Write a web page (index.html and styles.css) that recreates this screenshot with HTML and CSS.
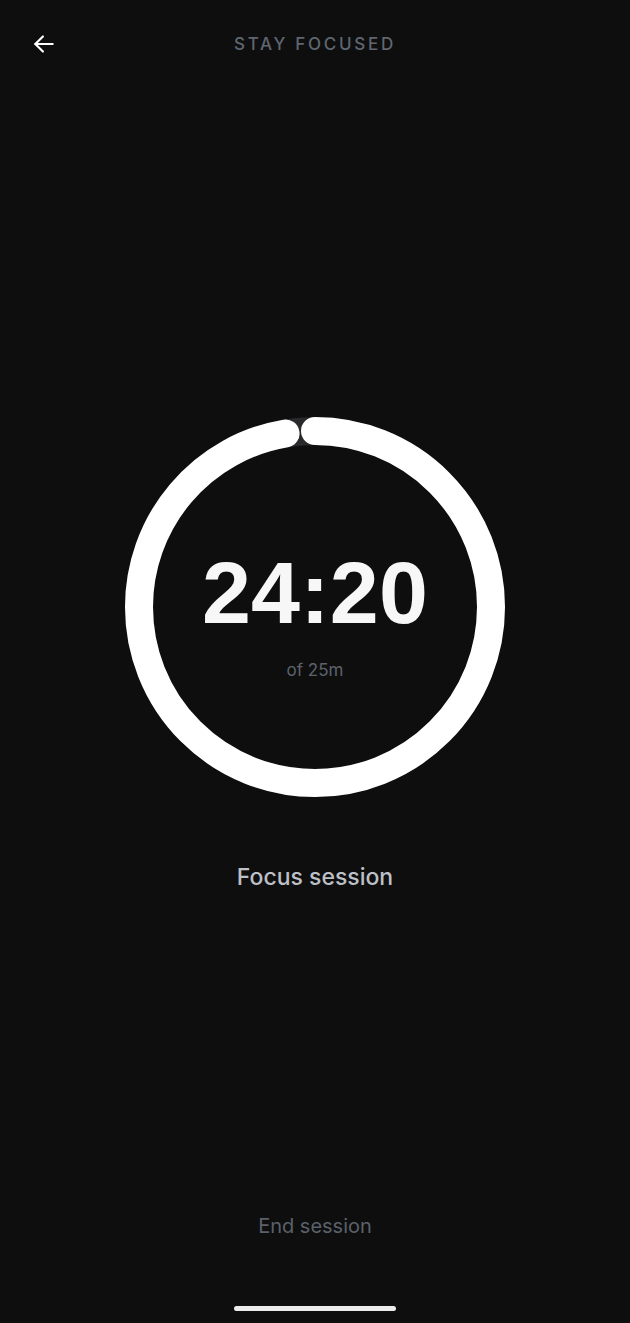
FILE: index.html
```html
<!DOCTYPE html>
<html lang="en">
  <head>
    <meta charset="UTF-8" />
    <meta name="viewport" content="width=device-width, initial-scale=1.0" />
    <title>Stay Focused</title>
    <link rel="stylesheet" href="styles.css">
  </head>
  <body>
    <div class="app">
      <div class="topbar">
        <button class="back" aria-label="Back">
          <svg width="26" height="26" viewBox="0 0 24 24" fill="none" stroke="#ffffff" stroke-width="2" stroke-linecap="round" stroke-linejoin="round">
            <path d="M20 12H4" />
            <path d="M11 5l-7 7 7 7" />
          </svg>
        </button>
        <div class="title">STAY FOCUSED</div>
        <div class="spacer-right"></div>
      </div>

      <div class="timer">
        <svg class="ring" width="380" height="380" viewBox="0 0 380 380">
          <circle cx="190" cy="190" r="176" fill="none" stroke="#2a2a2c" stroke-width="28" />
          <circle
            class="progress"
            cx="190"
            cy="190"
            r="176"
            fill="none"
            stroke="#ffffff"
            stroke-width="28"
            stroke-linecap="round"
            stroke-dasharray="1075.8 1105.8"
            transform="rotate(-90 190 190)"
          />
        </svg>
        <div class="readout">
          <div class="time">24:20</div>
          <div class="total">of 25m</div>
        </div>
      </div>

      <div class="label">Focus session</div>

      <div class="grow"></div>

      <button class="end">End session</button>
      <div class="home-bar"></div>
    </div>
  </body>
</html>
```

FILE: styles.css
```css
html,
body {
  margin: 0;
  padding: 0;
  background: #0e0e0f;
}

body {
  font-family: Inter, "Liberation Sans", sans-serif;
}

.app {
  height: 1323px;
  display: flex;
  flex-direction: column;
  align-items: center;
}

.topbar {
  width: 100%;
  height: 88px;
  display: grid;
  grid-template-columns: 90px 1fr 90px;
  align-items: center;
}

.back {
  background: none;
  border: 0;
  padding: 0 0 0 31px;
  margin: 0;
  display: flex;
  align-items: center;
  height: 88px;
  cursor: pointer;
}

.title {
  text-align: center;
  color: #5f6670;
  font-size: 17px;
  font-weight: 500;
  letter-spacing: 2.7px;
}

.timer {
  position: relative;
  width: 380px;
  height: 380px;
  margin-top: 329px;
}

.ring {
  display: block;
}

.readout {
  position: absolute;
  inset: 0;
  display: flex;
  flex-direction: column;
  align-items: center;
}

.time {
  margin-top: 132px;
  color: #f7f7f8;
  font-family: "Liberation Sans", Arial, sans-serif;
  font-size: 88px;
  font-weight: 700;
  line-height: 1;
  letter-spacing: 0.2px;
}

.total {
  margin-top: 23px;
  color: #5d636c;
  font-size: 17px;
}

.label {
  margin-top: 66px;
  color: #bdc0c6;
  font-size: 23px;
  font-weight: 500;
  line-height: 28px;
}

.grow {
  flex: 1;
}

.end {
  background: none;
  border: 0;
  padding: 0;
  font-family: inherit;
  color: #5b616a;
  font-size: 20px;
  line-height: 26px;
  cursor: pointer;
}

.home-bar {
  width: 162px;
  height: 5px;
  border-radius: 3px;
  background: #ececec;
  margin-top: 67px;
  margin-bottom: 12px;
}
```
